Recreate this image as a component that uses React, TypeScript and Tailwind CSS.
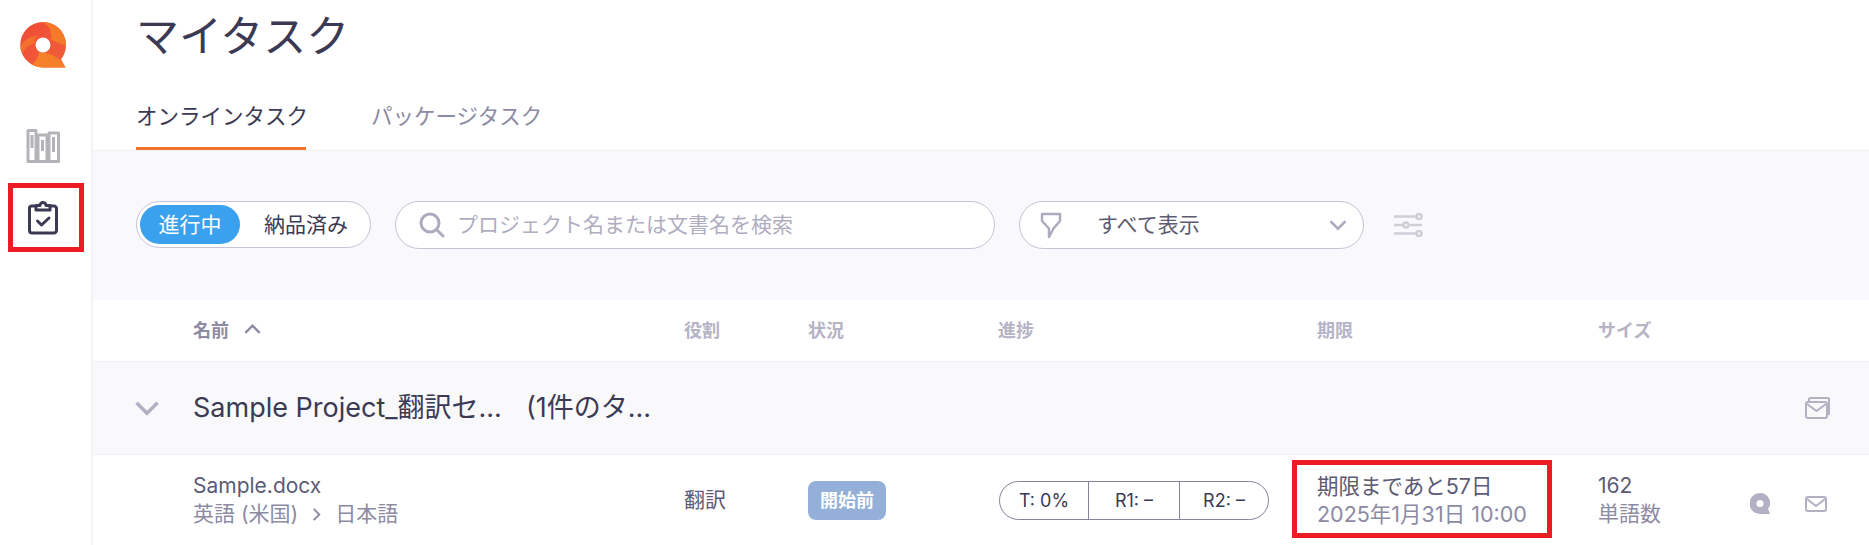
const FONT = "font-['Inter','Noto_Sans_CJK_JP',sans-serif]"
const COLS = 'grid grid-cols-[100px_491px_124px_190px_319px_281px_1fr] items-center'

function Logo() {
  const q = 'M24 1a23 23 0 0 1 18 37.300L46.500 46.500H24A22.700 22.700 0 0 1 24 1Z'
  return (
    <svg width="48" height="48" viewBox="0 0 48 48" fill="none">
      <defs>
        <linearGradient id="lg" x1="0" y1="0" x2="1" y2="1">
          <stop offset="0" stopColor="#ef4a36" />
          <stop offset="1" stopColor="#f2603a" />
        </linearGradient>
        <clipPath id="qclip">
          <path d={q} />
        </clipPath>
      </defs>
      <path d={q} fill="url(#lg)" />
      <g clipPath="url(#qclip)">
        <path d="M20 0c10 3 13 9 12 19l16 6V0Z" fill="#f47a2a" />
        <path d="M0 30c2-9 9-15 19-15-3 2-4 5-3 8-6 0-12 5-13 15Z" fill="#f3702c" />
        <path d="M20 31c9 0 20 4 28 17H20c-4 0-7-1-10-3 5-2 9-7 10-14Z" fill="#f6802a" />
      </g>
      <circle cx="24" cy="24" r="7.500" fill="#fff" />
    </svg>
  )
}

function BoardIcon() {
  return (
    <svg width="36" height="36" viewBox="0 0 36 36" fill="none" stroke="#b4b4b8" strokeWidth="3">
      <path d="M3 2.500h8v31H3zM13 7h9v26.500h-9zM24 5h9.500v28.500H24z" strokeLinejoin="round" />
      <path d="M7 7v13M17.500 12v11M28.500 9v15" />
    </svg>
  )
}

function ClipboardIcon() {
  return (
    <svg width="30" height="36" viewBox="0 0 30 36" fill="none" stroke="#3b3a54" strokeWidth="3" strokeLinecap="round" strokeLinejoin="round">
      <path d="M8 7H3.500A2.500 2.500 0 0 0 1.500 9.500v22A2.500 2.500 0 0 0 4 34h22a2.500 2.500 0 0 0 2.500-2.500v-22A2.500 2.500 0 0 0 26 7h-4" />
      <path d="M8 11V6.500h4a3 3 0 0 1 6 0h4V11Z" />
      <path d="M9.500 22l4 4 7.500-7" />
    </svg>
  )
}

function SearchIcon() {
  return (
    <svg width="26" height="26" viewBox="0 0 26 26" fill="none" stroke="#aeabbf" strokeWidth="3" strokeLinecap="round">
      <circle cx="11" cy="11" r="9" />
      <path d="M18 18l6 6" />
    </svg>
  )
}

function FilterIcon() {
  return (
    <svg width="22" height="27" viewBox="0 0 22 27" fill="none" stroke="#aeabbf" strokeWidth="2.500" strokeLinejoin="round">
      <path d="M2 2h18v7l-6.500 7.500L9 25v-8.500L2 9Z" />
    </svg>
  )
}

function SlidersIcon() {
  return (
    <svg width="30" height="26" viewBox="0 0 30 26" fill="none" stroke="#cfcdd6" strokeWidth="2.500">
      <path d="M1 4.500h22M1 13h9M17 13h12M1 21.500h22" />
      <circle cx="26" cy="4.500" r="2.500" />
      <circle cx="13" cy="13" r="2.500" />
      <circle cx="26" cy="21.500" r="2.500" />
    </svg>
  )
}

function Chevron({ dir, color, size }: { dir: 'up' | 'down' | 'right'; color: string; size: number }) {
  const d = dir === 'up' ? 'M2 10l6-6 6 6' : dir === 'down' ? 'M2 5l6 6 6-6' : 'M5 2l6 6-6 6'
  return (
    <svg width={size} height={size} viewBox="0 0 16 16" fill="none" stroke={color} strokeWidth="2">
      <path d={d} />
    </svg>
  )
}

function MailIcon() {
  return (
    <svg width="22" height="16" viewBox="0 0 22 16" fill="none" stroke="#b3b0c3" strokeWidth="2" strokeLinejoin="round">
      <rect x="1" y="1" width="20" height="14" rx="2" />
      <path d="M2 3l9 7 9-7" />
    </svg>
  )
}

function MultiMailIcon() {
  return (
    <svg width="25" height="22" viewBox="0 0 25 22" fill="none" stroke="#b3b0c3" strokeWidth="2" strokeLinejoin="round">
      <path d="M4 4V2.500A1.500 1.500 0 0 1 5.500 1h17A1.500 1.500 0 0 1 24 2.500V17h-1.500" />
      <rect x="1" y="5" width="21" height="16" rx="2" />
      <path d="M2 7l9.500 7L21 7" />
    </svg>
  )
}

function SmallQ() {
  return (
    <svg width="20" height="21" viewBox="0 0 20 21">
      <path
        fillRule="evenodd"
        fill="#b3b0c3"
        d="M10 0a10 10 0 0 1 8 16l2 5H10A10 10 0 0 1 10 0ZM10 7a3.500 3.500 0 1 0 0 7 3.500 3.500 0 0 0 0-7Z"
      />
    </svg>
  )
}

export default function App() {
  return (
    <div className={`${FONT} relative flex h-[545px] w-[1869px] overflow-hidden bg-white text-[#3b3a54]`}>
      <aside className="flex w-[93px] shrink-0 flex-col items-center border-r-2 border-[#f4f4f7] pr-[6px]">
        <div className="mt-[21px] flex h-[48px] items-center">
          <Logo />
        </div>
        <div className="mt-[59px]">
          <BoardIcon />
        </div>
        <div className="mt-[35px]">
          <ClipboardIcon />
        </div>
      </aside>

      <main className="min-w-0 flex-1">
        <header className="h-[151px] border-b border-[#f0f0f4] pl-[43px]">
          <h1 className="h-[72px] pt-[8px] text-[43px] leading-[56px] font-normal">マイタスク</h1>
          <nav className="mt-[22px] flex gap-[65px] text-[21.500px] leading-[30px]">
            <div className="h-[56px] w-[170px] border-b-[3px] border-[#f2742b] pt-[7px] whitespace-nowrap">オンラインタスク</div>
            <div className="pt-[7px] whitespace-nowrap text-[#8d8aa3]">パッケージタスク</div>
          </nav>
        </header>

        <section className="flex h-[149px] items-start bg-[#f8f8fd] pt-[50px] pl-[43px]">
          <div className="flex h-[47px] w-[235px] items-center rounded-full border border-[#c6c4d4] bg-white pl-[3px] text-[21px]">
            <span className="flex h-[39px] w-[100px] items-center justify-center rounded-full bg-[#3aa1ee] text-white">進行中</span>
            <span className="ml-[24px] whitespace-nowrap">納品済み</span>
          </div>
          <div className="ml-[24px] flex h-[48px] w-[600px] items-center gap-[12px] rounded-full border border-[#c6c4d4] bg-white pl-[23px] text-[21px] text-[#b0adc1]">
            <SearchIcon />
            <span>プロジェクト名または文書名を検索</span>
          </div>
          <div className="ml-[24px] flex h-[48px] w-[345px] items-center rounded-full border border-[#c6c4d4] bg-white pr-[15px] pl-[20px] text-[21px] text-[#5d5b74]">
            <FilterIcon />
            <span className="ml-[35px] flex-1">すべて表示</span>
            <Chevron dir="down" color="#aeabbf" size={20} />
          </div>
          <div className="mt-[11px] ml-[29px]">
            <SlidersIcon />
          </div>
        </section>

        <div className={`${COLS} h-[62px] border-b border-[#efeff3] text-[18px] font-bold text-[#b5b3c5]`}>
          <div />
          <div className="flex items-center gap-[14px] text-[#8d8aa3]">
            名前
            <Chevron dir="up" color="#8d8aa3" size={19} />
          </div>
          <div>役割</div>
          <div>状況</div>
          <div>進捗</div>
          <div>期限</div>
          <div>サイズ</div>
        </div>

        <div className={`${COLS} h-[93px] border-b border-[#efeff3] bg-[#f9f9fb]`}>
          <div className="pl-[40px]">
            <Chevron dir="down" color="#b3b0c3" size={28} />
          </div>
          <div className="col-span-5 flex gap-[24px] text-[27px] whitespace-nowrap">
            <span>Sample Project_翻訳セ...</span>
            <span>(1件のタ...</span>
          </div>
          <div className="flex justify-end pr-[39px]">
            <MultiMailIcon />
          </div>
        </div>

        <div className={`${COLS} h-[90px] text-[21px]`}>
          <div />
          <div className="leading-[28px]">
            <div className="text-[#5d5b74]">Sample.docx</div>
            <div className="flex items-center gap-[11px] text-[#8d8aa3]">
              英語 (米国)
              <Chevron dir="right" color="#8d8aa3" size={15} />
              日本語
            </div>
          </div>
          <div className="text-[#5d5b74]">翻訳</div>
          <div>
            <span className="inline-flex h-[39px] w-[78px] items-center justify-center rounded-[8px] bg-[#95b0d8] text-[18px] font-bold text-white">開始前</span>
          </div>
          <div className="ml-[1px] flex h-[39px] w-[270px] items-center rounded-full border border-[#85829a] text-[18px]">
            <span className="flex h-full w-[89px] items-center justify-center border-r border-[#85829a]">T: 0%</span>
            <span className="flex h-full w-[91px] items-center justify-center border-r border-[#85829a]">R1: –</span>
            <span className="flex h-full flex-1 items-center justify-center">R2: –</span>
          </div>
          <div className="text-[21.500px] leading-[28px]">
            <div className="text-[#5d5b74]">期限まであと57日</div>
            <div className="text-[#8d8aa3]">2025年1月31日 10:00</div>
          </div>
          <div className="flex items-center justify-between pr-[33px]">
            <div className="leading-[28px]">
              <div className="text-[#5d5b74]">162</div>
              <div className="text-[#8d8aa3]">単語数</div>
            </div>
          </div>
        </div>
      </main>

      <div className="absolute top-[493px] left-[1750px] flex items-center gap-[35px]">
        <SmallQ />
        <MailIcon />
      </div>

      <div className="absolute top-[183px] left-[8px] h-[69px] w-[76px] border-[5px] border-[#ed1c24]" />
      <div className="absolute top-[460px] left-[1292px] h-[78px] w-[260px] border-[5px] border-[#ed1c24]" />
    </div>
  )
}
